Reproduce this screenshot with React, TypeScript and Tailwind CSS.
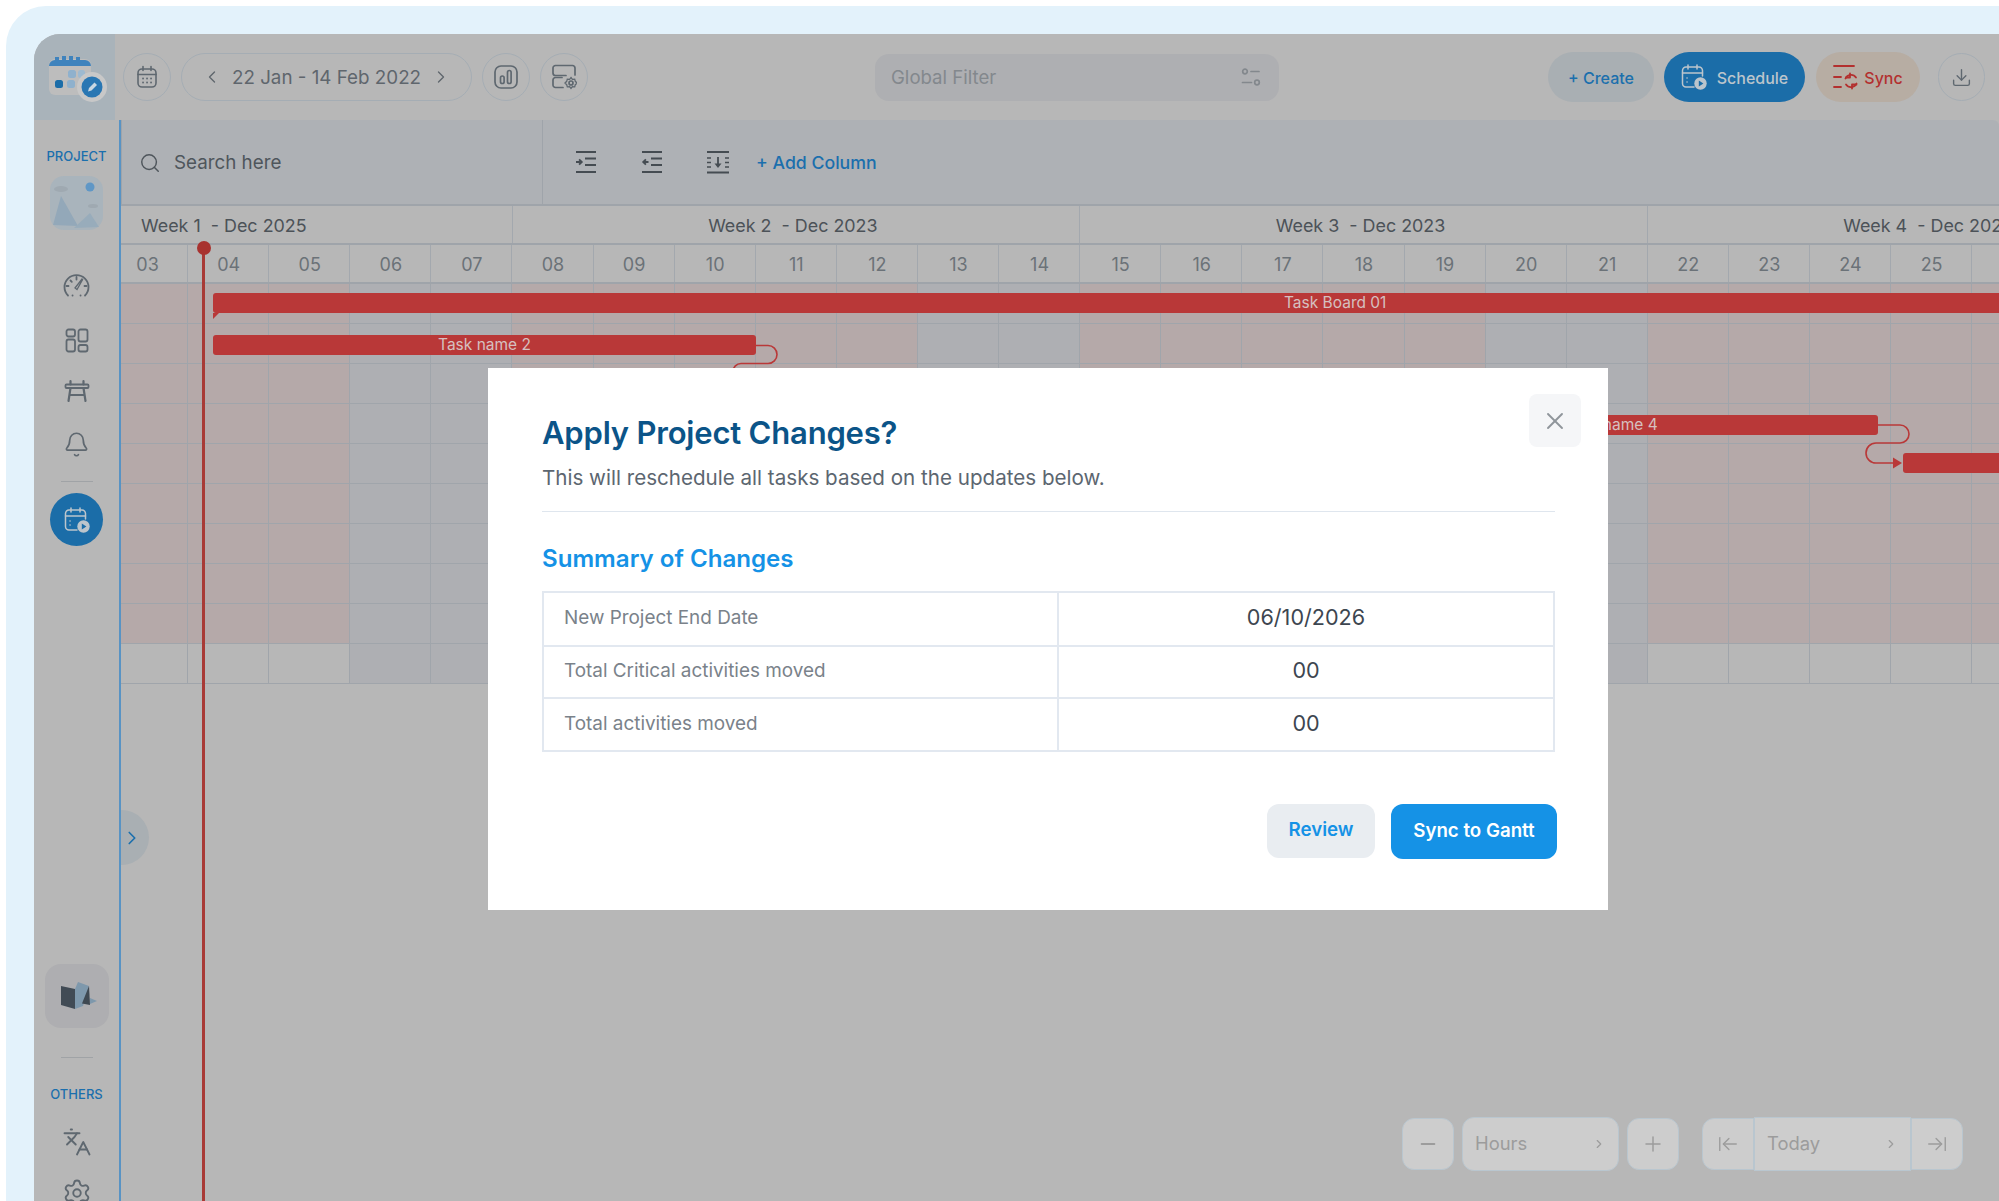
import {
  ArrowLeftToLine,
  ArrowRightToLine,
  Bell,
  ChevronLeft,
  ChevronRight,
  Download,
  Languages,
  Minus,
  Plus,
  Search,
  Settings,
  X,
} from 'lucide-react';

const weeks = [
  { days: 5, label: 'Week 1  - Dec 2025', left: true },
  { days: 7, label: 'Week 2  - Dec 2023' },
  { days: 7, label: 'Week 3  - Dec 2023' },
  { days: 7, label: 'Week 4  - Dec 2023' },
];

const days = Array.from({ length: 26 }, (_, i) => String(i + 3).padStart(2, '0'));
const offDays = ['06', '07', '13', '14', '20', '21', '27', '28'];
const rows = Array.from({ length: 10 }, (_, i) => i);

const ICON = '#5f6870';

const CalendarIcon = () => (
  <svg width="22" height="24" viewBox="0 0 22 24" fill="none" stroke={ICON} strokeWidth="1.6" strokeLinecap="round">
    <rect x="2" y="4" width="18" height="18" rx="4" />
    <path d="M2 9.5h18M7 1.5v4M15 1.5v4" />
    <path d="M7 13.5h.1M11 13.5h.1M15 13.5h.1M7 17.5h.1M11 17.5h.1M15 17.5h.1" strokeWidth="1.8" />
  </svg>
);

const ChartIcon = () => (
  <svg width="24" height="24" viewBox="0 0 24 24" fill="none" stroke={ICON} strokeWidth="1.7">
    <rect x="1" y="1" width="22" height="22" rx="6" />
    <rect x="6.5" y="11" width="3.6" height="7.5" rx="1.8" />
    <rect x="13.5" y="5.5" width="3.6" height="13" rx="1.8" />
  </svg>
);

const ServerGearIcon = () => (
  <svg width="26" height="26" viewBox="0 0 26 26" fill="none" stroke={ICON} strokeWidth="1.7" strokeLinecap="round">
    <path d="M24 11V4a2.5 2.5 0 0 0-2.5-2.5h-17A2.5 2.5 0 0 0 2 4v5a2.5 2.5 0 0 0 2.5 2.5H15" />
    <path d="M11 13.500H4.500A2.500 2.500 0 0 0 2 16v5a2.500 2.500 0 0 0 2.500 2.500H12" />
    <circle cx="20" cy="19" r="2" />
    <path d="M20 13.500l1.400 1.800 2.300-.2.600 2.200 1.700 1.700-1.700 1.700-.6 2.200-2.300-.2-1.400 1.800-1.400-1.800-2.300.2-.6-2.200-1.700-1.700 1.700-1.700.6-2.200 2.300.2z" strokeWidth="1.300" />
  </svg>
);

const FilterIcon = () => (
  <svg width="20" height="20" viewBox="0 0 20 20" fill="none" stroke="#83888d" strokeWidth="1.700" strokeLinecap="round">
    <circle cx="4" cy="4.500" r="2.300" />
    <path d="M10 4.500h8M1.500 15.500h9" />
    <circle cx="16" cy="15.500" r="2.300" />
  </svg>
);

const ScheduleIcon = ({ color = '#bcc5cc', play = '#1b6da8' }: { color?: string; play?: string }) => (
  <svg width="26" height="26" viewBox="0 0 26 26" fill="none" stroke={color} strokeWidth="1.500" strokeLinecap="round">
    <path d="M13 23H5a3.500 3.500 0 0 1-3.500-3.500v-13A3.500 3.500 0 0 1 5 3h13a3.500 3.500 0 0 1 3.500 3.500V12" />
    <path d="M1.500 9h20M7 1v4M16 1v4M6 14h.1M6 18h.1" />
    <circle cx="19.500" cy="19.500" r="6.200" fill={color} stroke="none" />
    <path d="M17.800 16.600l4.600 2.900-4.600 2.900z" fill={play} stroke="none" />
  </svg>
);

const SyncIcon = () => (
  <svg width="26" height="26" viewBox="0 0 26 26" fill="none" stroke="#b3302f" strokeWidth="1.800" strokeLinecap="round" strokeLinejoin="round">
    <path d="M1 2h20M1 13h7M1 23h7" />
    <path d="M12.500 14.500A6 6 0 0 1 23 13.500" />
    <path d="M23.500 19.500A6 6 0 0 1 13 20.500" />
    <path d="M17 9.500v4h-4M19 24.500v-4h4.500" />
  </svg>
);

const IndentIcon = ({ out }: { out?: boolean }) => (
  <svg width="22" height="24" viewBox="0 0 22 24" fill="none" stroke="#454c52" strokeWidth="1.800">
    <path d="M1 2h20M10 8.500h11M10 15h11M1 22h20" />
    {out ? <path d="M7.500 12H2.500m2.400-2.600L2.200 12l2.700 2.600" /> : <path d="M1 12h5.500m-2.400-2.600L6.800 12l-2.700 2.600" />}
  </svg>
);

const WrapIcon = () => (
  <svg width="24" height="24" viewBox="0 0 24 24" fill="none" stroke="#454c52" strokeWidth="1.800">
    <path d="M1 2h22M1 22.500h22M12 7v9" />
    <path d="M8.500 13.500h7L12 18z" fill="#454c52" stroke="none" />
    <path d="M1 8h4M1 12.500h4M1 17h4M19 8h4M19 12.500h4M19 17h4" strokeWidth="1.500" />
  </svg>
);

const GaugeIcon = () => (
  <svg width="27" height="25" viewBox="0 0 27 25" fill="none" stroke={ICON} strokeWidth="1.800" strokeLinecap="round">
    <path d="M5 22.500A12 12 0 1 1 22 22.500" />
    <path d="M13.500 4v2.500M5.500 13H3.500M23.500 13h-2M7.500 7.500l1.300 1.300" />
    <path d="M12 15l7-9 .6 .6-5.600 10z" strokeWidth="1.300" />
    <path d="M9.500 22.500h.1M17.500 22.500h.1" />
  </svg>
);

const TilesIcon = () => (
  <svg width="24" height="25" viewBox="0 0 24 25" fill="none" stroke={ICON} strokeWidth="1.800">
    <rect x="1.500" y="1.500" width="8.500" height="7" rx="2" />
    <rect x="13.500" y="1.500" width="9" height="12" rx="2" />
    <rect x="1.500" y="11.500" width="8.500" height="12" rx="2" />
    <rect x="13.500" y="17" width="9" height="6.500" rx="2" />
  </svg>
);

const BenchIcon = () => (
  <svg width="26" height="24" viewBox="0 0 26 24" fill="none" stroke={ICON} strokeLinecap="round">
    <rect x="1.500" y="5.500" width="23" height="3.500" rx="1" strokeWidth="1.800" />
    <path d="M6.500 2v3.500M19.500 2v3.500M6.500 9l-2 13M19.500 9l2 13M5.500 16h15" strokeWidth="2.200" />
  </svg>
);

const AppLogo = () => (
  <svg width="81" height="86" viewBox="0 0 81 86">
    <rect x="15" y="25" width="42" height="36" rx="6" fill="#bdbdbd" />
    <path d="M15 32a6 6 0 0 1 6-6V23h4v3h3v-4h4v4h3v-4h4v4h3v-3h4v3h5a6 6 0 0 1 6 6z" fill="#3f83bd" />
    <rect x="34" y="36" width="8" height="8" rx="2.500" fill="#8fb1cd" />
    <rect x="44" y="36" width="7" height="8" rx="2.500" fill="#9ebad0" />
    <rect x="21" y="46" width="8" height="8" rx="2.500" fill="#1b6da8" />
    <rect x="33" y="46" width="8" height="8" rx="2.500" fill="#8fb1cd" />
    <circle cx="58" cy="53" r="15" fill="#c8c8c8" />
    <circle cx="58" cy="53" r="10.500" fill="#2a77b3" />
    <path d="M54 57.500l1-3.500 5.500-5.500 2.500 2.500-5.500 5.500z" fill="#c9d7e2" />
  </svg>
);

const ProjectThumb = () => (
  <svg width="53" height="54" viewBox="0 0 53 54">
    <rect width="53" height="54" rx="14" fill="#a9b4bc" />
    <circle cx="40" cy="11" r="4.500" fill="#5f97c6" />
    <ellipse cx="11" cy="13" rx="7" ry="3" fill="#9fa9b1" />
    <ellipse cx="43" cy="30" rx="5" ry="2" fill="#9fa9b1" />
    <path d="M3 49L11 20l17 30z" fill="#93a8b9" />
    <path d="M24 52L40 37l9 14z" fill="#98acbb" />
  </svg>
);

const MapIcon = () => (
  <svg width="38" height="30" viewBox="0 0 38 30">
    <path d="M1 5l14 3v20L1 24z" fill="#414b55" />
    <path d="M15 8l3-7 11 4-6 20-8 3z" fill="#7e98ac" />
    <path d="M29 5l1 19-8-1.500z" fill="#3f4952" />
    <path d="M30 17l7 3-7 3z" fill="#7e98ac" />
  </svg>
);

const CircleBtn = ({ children }: { children: React.ReactNode }) => (
  <div className="flex h-[48px] w-[48px] items-center justify-center rounded-full border border-[#a5adb4]">{children}</div>
);

const Bar = ({ className, label }: { className: string; label?: string }) => (
  <div className={`absolute flex h-[20px] items-center justify-center rounded-[3px] bg-[#b93838] pb-[1px] text-[15.500px] text-[#d6c0c0] ${className}`}>{label}</div>
);

const TopBar = () => (
  <div className="flex h-[86px] items-center">
    <div className="h-full w-[81px] shrink-0 bg-[#a9b3ba]">
      <AppLogo />
    </div>
    <div className="ml-[8px] flex items-center gap-[10px]">
      <CircleBtn><CalendarIcon /></CircleBtn>
      <div className="flex h-[48px] w-[291px] items-center justify-center gap-[10px] rounded-full border border-[#a5adb4] text-[18.800px] text-[#5f666d]">
        <ChevronLeft size={20} strokeWidth={1.6} />
        <span className="pt-[2px]">22 Jan - 14 Feb 2022</span>
        <ChevronRight size={20} strokeWidth={1.6} />
      </div>
      <CircleBtn><ChartIcon /></CircleBtn>
      <CircleBtn><ServerGearIcon /></CircleBtn>
    </div>
    <div className="ml-[287px] flex h-[47px] w-[404px] items-center justify-between rounded-[14px] bg-[#aeafb2] pl-[16px] pr-[18px] text-[18.600px] text-[#83888d]">
      <span className="pt-[1px]">Global Filter</span>
      <FilterIcon />
    </div>
    <div className="ml-[269px] flex items-center text-[16px] font-medium">
      <div className="flex h-[50px] w-[106px] items-center justify-center rounded-full bg-[#a9afb3] pt-[1px] text-[#1b6fad]">+ Create</div>
      <div className="ml-[10px] flex h-[50px] w-[141px] items-center justify-center gap-[10px] rounded-full bg-[#1b6da8] text-[#bcc5cc]">
        <ScheduleIcon />
        <span className="pt-[1px]">Schedule</span>
      </div>
      <div className="ml-[11px] flex h-[50px] w-[104px] items-center justify-center gap-[5px] rounded-full bg-[#b7ada3] text-[#b3302f]">
        <SyncIcon />
        <span className="pt-[1px]">Sync</span>
      </div>
      <div className="ml-[18px] flex h-[48px] w-[47px] items-center justify-center rounded-full border border-[#a5adb4] text-[#5f6870]">
        <Download size={21} strokeWidth={1.6} />
      </div>
    </div>
  </div>
);

const Sidebar = () => (
  <aside className="flex w-[85px] shrink-0 flex-col items-center overflow-hidden pt-[28px]">
    <div className="h-[16px] shrink-0 text-[13px] font-medium leading-[16px] text-[#1b6fad]">PROJECT</div>
    <div className="mt-[12px] shrink-0"><ProjectThumb /></div>
    <div className="mt-[43px] shrink-0"><GaugeIcon /></div>
    <div className="mt-[30px] shrink-0"><TilesIcon /></div>
    <div className="mt-[26px] shrink-0"><BenchIcon /></div>
    <Bell className="mt-[28px] shrink-0" size={27} color={ICON} strokeWidth={1.500} />
    <div className="mt-[23px] h-px w-[32px] shrink-0 bg-[#a0a3a6]" />
    <div className="mt-[11px] flex h-[53px] w-[53px] shrink-0 items-center justify-center rounded-full bg-[#1b6da8]">
      <ScheduleIcon />
    </div>
    <div className="mt-[418px] flex h-[64px] w-[64px] shrink-0 items-center justify-center rounded-[16px] bg-[#aeaeb1] pl-[4px]">
      <MapIcon />
    </div>
    <div className="mt-[29px] h-px w-[32px] shrink-0 bg-[#a0a3a6]" />
    <div className="mt-[28px] h-[16px] shrink-0 text-[13px] font-medium leading-[16px] text-[#1b6fad]">OTHERS</div>
    <Languages className="mt-[25px] shrink-0" size={30} color={ICON} strokeWidth={1.500} />
    <Settings className="mt-[21px] shrink-0" size={30} color={ICON} strokeWidth={1.500} />
  </aside>
);

const Toolbar = () => (
  <div className="flex h-[84px] shrink-0 rounded-tr-[6px] border-l border-[#9fa4aa] bg-[#aeb1b5]">
    <div className="flex w-[421px] items-center gap-[13px] border-r border-[#9fa4aa] pl-[17px] pt-[1px] text-[18.800px] text-[#4f565c]">
      <Search size={22} strokeWidth={1.600} />
      <span className="pt-[2px]">Search here</span>
    </div>
    <div className="flex items-center pl-[32px]">
      <IndentIcon />
      <div className="ml-[44px]"><IndentIcon out /></div>
      <div className="ml-[43px]"><WrapIcon /></div>
      <span className="ml-[26px] pt-[2px] text-[17.700px] font-medium text-[#1b6fad]">+ Add Column</span>
    </div>
  </div>
);

const Gantt = () => (
  <div className="relative min-w-0 flex-1 overflow-hidden border-t-2 border-[#9fa4aa]">
    <div className="-ml-[14px] w-[2109px]">
      <div className="flex h-[39px] border-b-2 border-[#9fa4aa] text-[17.900px] text-[#4c5258]">
        {weeks.map((w) => (
          <div
            key={w.label}
            style={{ width: w.days * 81.1 }}
            className={`flex shrink-0 items-center whitespace-pre border-r border-[#a3a8ae] pt-[4px] ${w.left ? 'pl-[34px]' : 'justify-center pr-[6px]'}`}
          >
            {w.label}
          </div>
        ))}
      </div>
      <div className="grid h-[39px] grid-cols-[repeat(26,81.1px)] border-b-2 border-[#9fa4aa] text-[18px] text-[#6b7278]">
        {days.map((d) => (
          <div key={d} className="flex items-center justify-center border-r border-[#a3a8ae] pl-[1px] pt-[2px]">{d}</div>
        ))}
      </div>
      <div className="grid grid-cols-[repeat(26,81.1px)]">
        {rows.map((r) =>
          days.map((d) => (
            <div
              key={`${r}-${d}`}
              className={`h-[40px] border-r border-b border-[#a0a5ab] ${offDays.includes(d) ? 'bg-[#aeafb3]' : r === 9 ? 'bg-[#b7b7b7]' : 'bg-[#b5a9a9]'}`}
            />
          )),
        )}
      </div>
    </div>

    {/* today line */}
    <div className="absolute left-[81px] top-[41px] bottom-0 w-[3px] bg-[#a83a36]" />
    <div className="absolute left-[76px] top-[35px] h-[14px] w-[14px] rounded-full bg-[#a8322f]" />

    {/* bars */}
    <svg className="absolute left-[92px] top-[87px]" width="8" height="26">
      <path d="M0 20h6L0 26z" fill="#b93838" />
    </svg>
    <div className="absolute left-[92px] right-0 top-[87px] flex h-[20px] items-center rounded-l-[3px] bg-[#b93838] pb-[1px] pl-[1071px] text-[15.500px] text-[#d6c0c0]">Task Board 01</div>
    <Bar className="left-[92px] top-[129px] w-[543px]" label="Task name 2" />
    <Bar className="left-[1223px] top-[209px] w-[534px]" label="Task name 4" />
    <div className="absolute left-[1782px] right-0 top-[247px] h-[20px] rounded-l-[3px] bg-[#b93838]" />
    <svg className="absolute left-0 top-[-2px]" width="1878" height="300" fill="none" stroke="#b93838" strokeWidth="1.600">
      <path d="M635 141.500H647a9 9 0 0 1 0 18H620a8 8 0 0 0-8 8v8" />
      <path d="M1757 221H1779a9 9 0 0 1 0 18H1755a10 10 0 0 0 0 20H1772" />
      <path d="M1772 253.500l9 5.500-9 5.500z" fill="#b93838" stroke="none" />
    </svg>

    {/* collapse handle */}
    <div className="absolute left-0 top-[604px] flex h-[55px] w-[28px] items-center rounded-r-full bg-[#a9afb3] text-[#1b6fad]">
      <ChevronRight size={22} strokeWidth={1.800} />
    </div>

    {/* zoom controls */}
    <div className="absolute left-[1281px] top-[911px] flex items-center text-[18.400px] text-[#9c9c9c]">
      <div className="flex h-[52px] w-[52px] items-center justify-center rounded-[12px] border border-[#b9c6cf] bg-[#cdcdcd]"><Minus size={22} /></div>
      <div className="ml-[8px] flex h-[54px] w-[157px] items-center justify-between rounded-[12px] border border-[#b9c6cf] bg-[#cdcdcd] pl-[12px] pr-[12px]">
        <span>Hours</span>
        <ChevronRight size={14} />
      </div>
      <div className="ml-[8px] flex h-[52px] w-[52px] items-center justify-center rounded-[12px] border border-[#b9c6cf] bg-[#cdcdcd]"><Plus size={24} strokeWidth={1.500} /></div>
      <div className="ml-[23px] flex h-[52px] w-[52px] items-center justify-center rounded-l-[12px] border border-[#b9c6cf] bg-[#cdcdcd]"><ArrowLeftToLine size={22} strokeWidth={1.500} /></div>
      <div className="flex h-[54px] w-[157px] items-center justify-between border border-[#b9c6cf] bg-[#cdcdcd] pl-[12px] pr-[12px]">
        <span>Today</span>
        <ChevronRight size={14} />
      </div>
      <div className="flex h-[52px] w-[52px] items-center justify-center rounded-r-[12px] border border-[#b9c6cf] bg-[#cdcdcd]"><ArrowRightToLine size={22} strokeWidth={1.500} /></div>
    </div>
  </div>
);

const summary = [
  ['New Project End Date', '06/10/2026'],
  ['Total Critical activities moved', '00'],
  ['Total activities moved', '00'],
];

const Modal = () => (
  <div className="absolute left-[488px] top-[368px] h-[542px] w-[1120px] bg-white pl-[54px] pt-[45px]">
    <button className="absolute right-[27px] top-[26px] flex h-[53px] w-[52px] items-center justify-center rounded-[8px] bg-[#f5f6f8] text-[#8f959b]">
      <X size={28} strokeWidth={1.600} />
    </button>
    <h2 className="text-[31px] font-semibold leading-[40px] tracking-[-0.2px] text-[#0b5488]">Apply Project Changes?</h2>
    <p className="mt-[10px] text-[20.600px] leading-[30px] text-[#5c6670]">This will reschedule all tasks based on the updates below.</p>
    <div className="mt-[18px] h-px w-[1013px] bg-[#dfe6ee]" />
    <h3 className="mt-[30px] text-[24.100px] font-semibold leading-[34px] text-[#1592e6]">Summary of Changes</h3>
    <div className="mt-[15px] w-[1013px] border-2 border-[#e2e8f0]">
      {summary.map(([label, value], i) => (
        <div key={label} className={`grid grid-cols-[515px_1fr] ${i > 0 ? 'border-t-2 border-[#e2e8f0]' : ''} ${i === 2 ? 'h-[53px]' : 'h-[52px]'}`}>
          <div className="flex items-center border-r-2 border-[#e2e8f0] pb-[1px] pl-[20px] text-[18.900px] text-[#7a828a]">{label}</div>
          <div className="flex items-center justify-center pb-[3px] text-[21.600px] text-[#3d4650]">{value}</div>
        </div>
      ))}
    </div>
    <div className="mt-[52px] flex w-[1015px] items-start justify-end gap-[16px] text-[18.700px] font-semibold">
      <button className="h-[54px] w-[108px] rounded-[12px] bg-[#e9edf1] pb-[1px] text-[#1592e6]">Review</button>
      <button className="h-[55px] w-[166px] rounded-[12px] bg-[#1592e6] pb-[1px] text-white">Sync to Gantt</button>
    </div>
  </div>
);

export default function App() {
  return (
    <div className="relative h-[1201px] w-[1999px] overflow-hidden bg-white pl-[6px] pt-[6px] font-['Inter',sans-serif]">
      <div className="h-full rounded-tl-[40px] bg-[#e3f2fb] pl-[28px] pt-[28px]">
        <div className="h-full overflow-hidden rounded-tl-[26px] bg-[#b7b7b7]">
          <TopBar />
          <div className="flex h-[1081px]">
            <Sidebar />
            <div className="flex min-w-0 flex-1 flex-col border-l-2 border-[#5893c4]">
              <Toolbar />
              <Gantt />
            </div>
          </div>
        </div>
      </div>
      <Modal />
    </div>
  );
}
